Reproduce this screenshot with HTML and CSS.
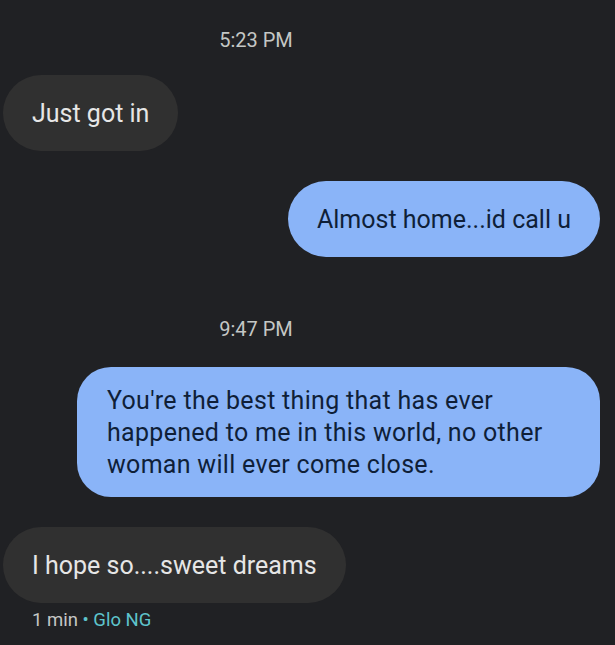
FILE: index.html
```html
<!DOCTYPE html>
<html lang="en">
<head>
    <meta charset="UTF-8">
    <meta name="viewport" content="width=device-width, initial-scale=1.0">
    <title>Messages</title>
    <link rel="stylesheet" href="styles.css">
</head>
<body>
    <div class="thread">
        <!-- First exchange -->
        <div class="stamp first">5:23 PM</div>
        <div class="row in">
            <div class="bubble received">Just got in</div>
        </div>
        <div class="row out">
            <div class="bubble sent">Almost home...id call u</div>
        </div>

        <!-- Second exchange -->
        <div class="stamp second">9:47 PM</div>
        <div class="row out">
            <div class="bubble sent long">You're the best thing that has ever happened to me in this world, no other woman will ever come close.</div>
        </div>
        <div class="row in last">
            <div class="bubble received">I hope so....sweet dreams</div>
        </div>
        <div class="meta">1 min <span class="carrier">&bull; Glo NG</span></div>
    </div>
</body>
</html>
```

FILE: styles.css
```css
body {
    margin: 0;
    background-color: #202124;
    font-family: Roboto, "Noto Sans", sans-serif;
    color: #e3e3e3;
}
.thread {
    display: flex;
    flex-direction: column;
    padding: 0 15px 0 3px;
}
.stamp {
    width: 506px;
    text-align: center;
    font-size: 20px;
    line-height: 24px;
    color: #c4c7c5;
}
.stamp.first {
    margin-top: 28px;
    margin-bottom: 23px;
}
.stamp.second {
    margin-top: 30px;
    margin-bottom: 26px;
}
.row {
    display: flex;
    margin-bottom: 30px;
}
.row.in {
    justify-content: flex-start;
}
.row.out {
    justify-content: flex-end;
}
.row.last {
    margin-bottom: 5px;
}
.bubble {
    font-size: 25px;
    line-height: 34px;
    padding: 22px 29px 20px;
    border-radius: 38px;
}
.received {
    background-color: #303030;
    color: #e6e6e6;
}
.sent {
    background-color: #8ab4f8;
    color: #0f1f38;
}
.sent.long {
    width: 464px;
    padding: 18px 29px 16px 30px;
    line-height: 32px;
    letter-spacing: 0.3px;
    border-radius: 34px;
}
.meta {
    padding-left: 29px;
    font-size: 18.5px;
    line-height: 24px;
    color: #c4c7c5;
}
.carrier {
    color: #5ec4cc;
}
```
